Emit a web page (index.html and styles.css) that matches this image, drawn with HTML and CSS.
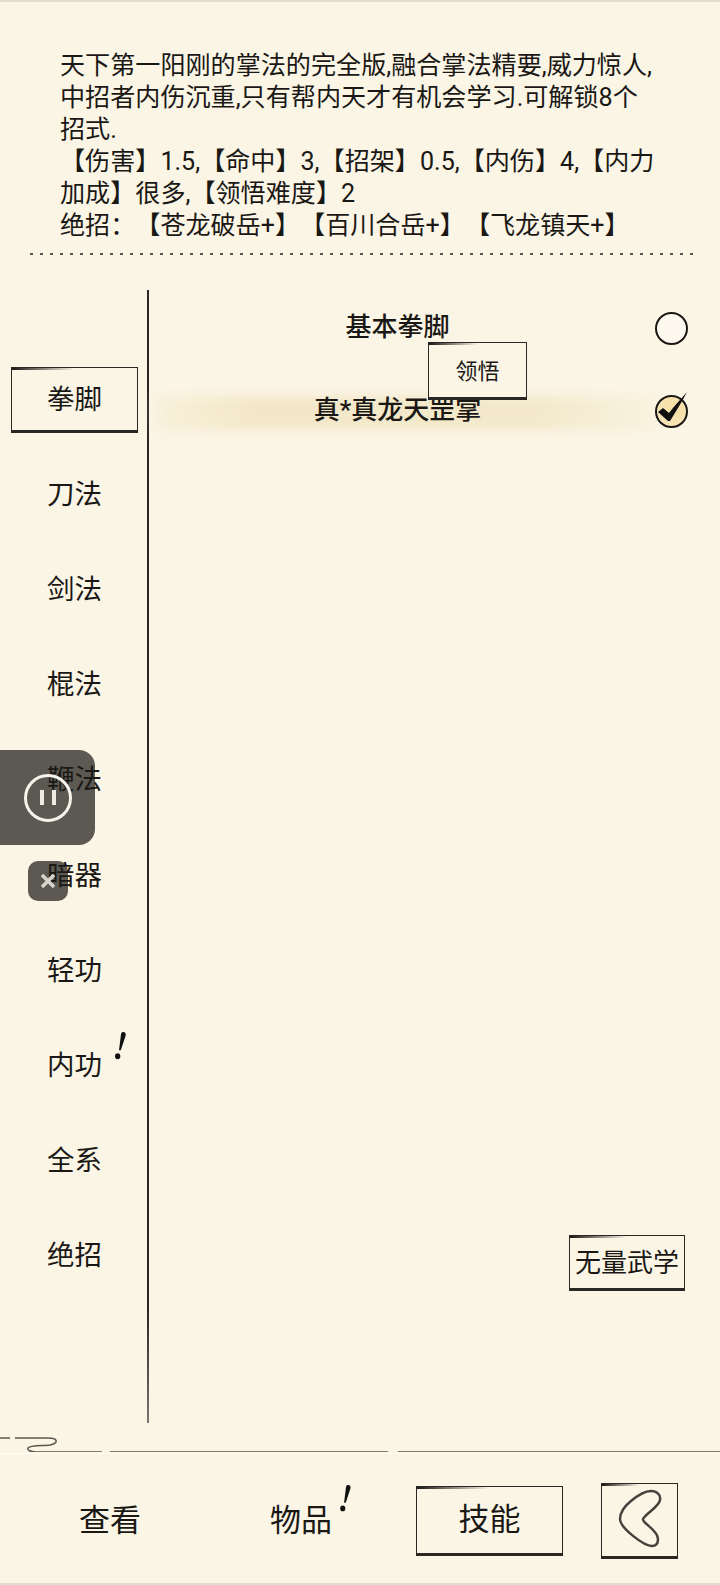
FILE: index.html
```html
<!DOCTYPE html>
<html lang="zh-CN">
  <head>
    <meta charset="UTF-8" />
    <meta name="viewport" content="width=device-width, initial-scale=1.0" />
    <title>技能</title>
    <link rel="stylesheet" href="styles.css">
  </head>
  <body>
    <div class="page">
      <p class="desc">天下第一阳刚的掌法的完全版,融合掌法精要,威力惊人,<br />中招者内伤沉重,只有帮内天才有机会学习.可解锁8个<br />招式.<br />【伤害】1.5,【命中】3,【招架】0.5,【内伤】4,【内力<br />加成】很多,【领悟难度】2<br />绝招：【苍龙破岳+】【百川合岳+】【飞龙镇天+】</p>
      <div class="dots"></div>

      <div class="main">
        <ul class="side">
          <li class="side-item"><span class="box side-on">拳脚</span></li>
          <li class="side-item">刀法</li>
          <li class="side-item">剑法</li>
          <li class="side-item">棍法</li>
          <li class="side-item">鞭法</li>
          <li class="side-item">暗器</li>
          <li class="side-item">轻功</li>
          <li class="side-item">
            内功
            <svg class="mark mark-side" viewBox="0 0 14 32"><path d="M10 1c3 0 3.500 2 3 4L8 20c-.5 1-2 1-2 0L8 4c.2-2 1-3 2-3z" /><ellipse cx="4.500" cy="27" rx="2.800" ry="3.200" /></svg>
          </li>
          <li class="side-item">全系</li>
          <li class="side-item">绝招</li>
        </ul>

        <div class="list">
          <div class="row">
            <span class="row-name">基本拳脚</span>
            <span class="radio"></span>
          </div>
          <div class="row row-on">
            <span class="row-name">真*真龙天罡掌</span>
            <span class="radio radio-on">
              <svg class="tick" viewBox="0 -4 36 36"><path d="M3 13l5-4 6 5C19 7 25 1 32 -7 27 3 21 12 15 22h-2z" /></svg>
            </span>
          </div>
          <button class="box learn">领悟</button>
          <button class="box more">无量武学</button>
        </div>
      </div>

      <svg class="swirl" viewBox="0 0 720 16" preserveAspectRatio="none">
        <path d="M0 2h10M15 2h33c10 0 11 5 2 7-6 1-20 0-22 3-1 2 2 4 8 4h66M110 16h278M398 16h322" />
      </svg>

      <div class="nav">
        <span class="nav-item nav-look">查看</span>
        <span class="nav-item nav-bag">
          物品
          <svg class="mark mark-bag" viewBox="0 0 14 32"><path d="M10 1c3 0 3.500 2 3 4L8 20c-.5 1-2 1-2 0L8 4c.2-2 1-3 2-3z" /><ellipse cx="4.500" cy="27" rx="2.800" ry="3.200" /></svg>
        </span>
        <span class="box nav-item nav-skill">技能</span>
        <span class="box nav-back">
          <svg class="back-icon" viewBox="0 0 44 64"><path d="M13 13C19 8 26 3 33 3c6 0 10 4 9 9-1 7-14 13-17 19-1 4 15 11 15 20 0 5-2 7-6 7C26 58 2 40 2 31c0-7 6-14 11-18z" /></svg>
        </span>
      </div>
    </div>

    <div class="float-panel">
      <span class="pause"><i></i><i></i></span>
    </div>
    <div class="float-close">
      <svg viewBox="0 0 16 16"><path d="M2 2l12 12M14 2L2 14" /></svg>
    </div>
  </body>
</html>
```

FILE: styles.css
```css
* {
  box-sizing: border-box;
}

html,
body {
  margin: 0;
  padding: 0;
}

body {
  font-family: Roboto, "Noto Sans CJK SC", sans-serif;
  color: #1a1815;
  background: #fbf5e6;
}

.page {
  position: relative;
  z-index: 1;
  display: flex;
  flex-direction: column;
  width: 720px;
  height: 1585px;
  border-top: 2px solid #e3dfd0;
  border-bottom: 2px solid #e3dfd0;
}

.desc {
  margin: 0;
  padding: 48px 0 0 60px;
  height: 241px;
  font-size: 25.100px;
  line-height: 32px;
  white-space: nowrap;
  text-spacing-trim: space-all;
}

.dots {
  margin: 10px 26px 0 30px;
  height: 2px;
  background: repeating-linear-gradient(90deg, #555 0 3px, transparent 3px 10px);
}

.main {
  display: flex;
  height: 1133px;
  margin-top: 35px;
}

/* left column of skill types */
.side {
  list-style: none;
  margin: 0;
  padding: 59px 0 0 2px;
  width: 149px;
  border-right: 2px solid;
  border-image: linear-gradient(#2a2825 90%, #77756e) 1;
}

.side-item {
  position: relative;
  display: flex;
  align-items: center;
  justify-content: center;
  height: 95.200px;
  font-size: 27.500px;
}

/* hand drawn frame: thin sides, heavy bottom, heavy start of the top stroke */
.box {
  border: 1.500px solid #2a2825;
  border-bottom-width: 3px;
  font-family: inherit;
  line-height: 1;
  color: inherit;
  background: linear-gradient(90deg, #1a1815, transparent) no-repeat left top / 50% 2px;
}

.side-on {
  display: flex;
  align-items: center;
  justify-content: center;
  width: 127px;
  height: 66px;
  margin-top: 6px;
  padding-top: 2px;
}

.mark {
  position: absolute;
  fill: #111;
}

.mark-side {
  top: 16px;
  left: 111px;
  width: 14px;
  height: 30px;
}

.list {
  position: relative;
  display: flex;
  flex-direction: column;
  flex: 1;
  padding-bottom: 132px;
}

.row {
  position: relative;
  display: flex;
  align-items: center;
  justify-content: center;
  height: 83px;
  padding: 2px 74px 0 0;
  font-size: 26px;
  font-weight: 500;
}

.row:first-child {
  margin-top: -8px;
}

.row-on::before {
  content: "";
  position: absolute;
  top: 31px;
  left: 6px;
  right: 63px;
  height: 34px;
  background: linear-gradient(90deg, #f8f0da, #f3e7c8 20%, #f3e8cb 75%, #f9f2de);
  filter: blur(5px);
}

.row-name {
  position: relative;
}

.radio {
  position: absolute;
  top: 30px;
  right: 32px;
  width: 33px;
  height: 33px;
  border: 2.500px solid #1a1815;
  border-radius: 50%;
  background: #fdf9ef;
}

.radio-on {
  background: radial-gradient(circle at 65% 35%, #f8dfa2, #f6e7c0);
  border-width: 2px;
}

.tick {
  position: absolute;
  top: -2px;
  left: -2px;
  width: 36px;
  height: 36px;
  overflow: visible;
  fill: #111;
}

.learn {
  position: absolute;
  top: 52px;
  left: 279px;
  width: 99px;
  height: 58px;
  padding: 4px 0 0;
  font-size: 22px;
  background-color: #fbf5e6;
  z-index: 1;
}

.more {
  align-self: flex-end;
  margin: auto 35px 0 0;
  width: 116px;
  height: 56px;
  padding: 2px 0 0;
  font-size: 26px;
}

.swirl {
  display: block;
  flex: none;
  width: 720px;
  height: 18px;
  margin-top: 13px;
  padding-bottom: 1px;
  fill: none;
  stroke: #5a574f;
  stroke-width: 1.500;
  border-bottom: 1px solid #fffdf6;
}

.nav {
  position: relative;
  display: flex;
  align-items: center;
  flex: 1;
  padding-top: 6px;
  padding-bottom: 2px;
  font-size: 31px;
}

.nav-item {
  display: flex;
  align-items: center;
  justify-content: center;
}

.nav-look {
  width: 62px;
  margin: 0 0 6px 79px;
}

.nav-bag {
  position: relative;
  width: 62px;
  margin: 0 0 6px 129px;
}

.mark-bag {
  top: -11px;
  left: 68px;
  width: 14px;
  height: 29px;
}

.nav-skill {
  width: 147px;
  height: 70px;
  margin-left: 84px;
}

.nav-back {
  display: flex;
  align-items: center;
  justify-content: center;
  width: 77px;
  height: 76px;
  margin-left: 38px;
}

.back-icon {
  width: 44px;
  height: 64px;
  fill: none;
  stroke: #44423c;
  stroke-width: 2.500;
}

/* recording widget: its plate lies under the page text, its glyphs over it */
.float-panel {
  position: absolute;
  top: 750px;
  left: 0;
  display: flex;
  align-items: center;
  justify-content: center;
  width: 95px;
  height: 95px;
  border-radius: 0 16px 16px 0;
  background: #5c5852;
}

.pause {
  position: relative;
  z-index: 2;
  display: flex;
  align-items: center;
  justify-content: center;
  gap: 8px;
  width: 48px;
  height: 48px;
  border: 3px solid #f6f3ea;
  border-radius: 50%;
}

.pause i {
  width: 4px;
  height: 15px;
  background: #f0ece2;
}

.float-close {
  position: absolute;
  top: 861px;
  left: 28px;
  display: flex;
  align-items: center;
  justify-content: center;
  width: 40px;
  height: 40px;
  border-radius: 10px;
  background: #5c5852;
}

.float-close svg {
  position: relative;
  z-index: 2;
  width: 16px;
  height: 16px;
  fill: none;
  stroke: #d8d5cc;
  stroke-width: 3.500;
}
```
